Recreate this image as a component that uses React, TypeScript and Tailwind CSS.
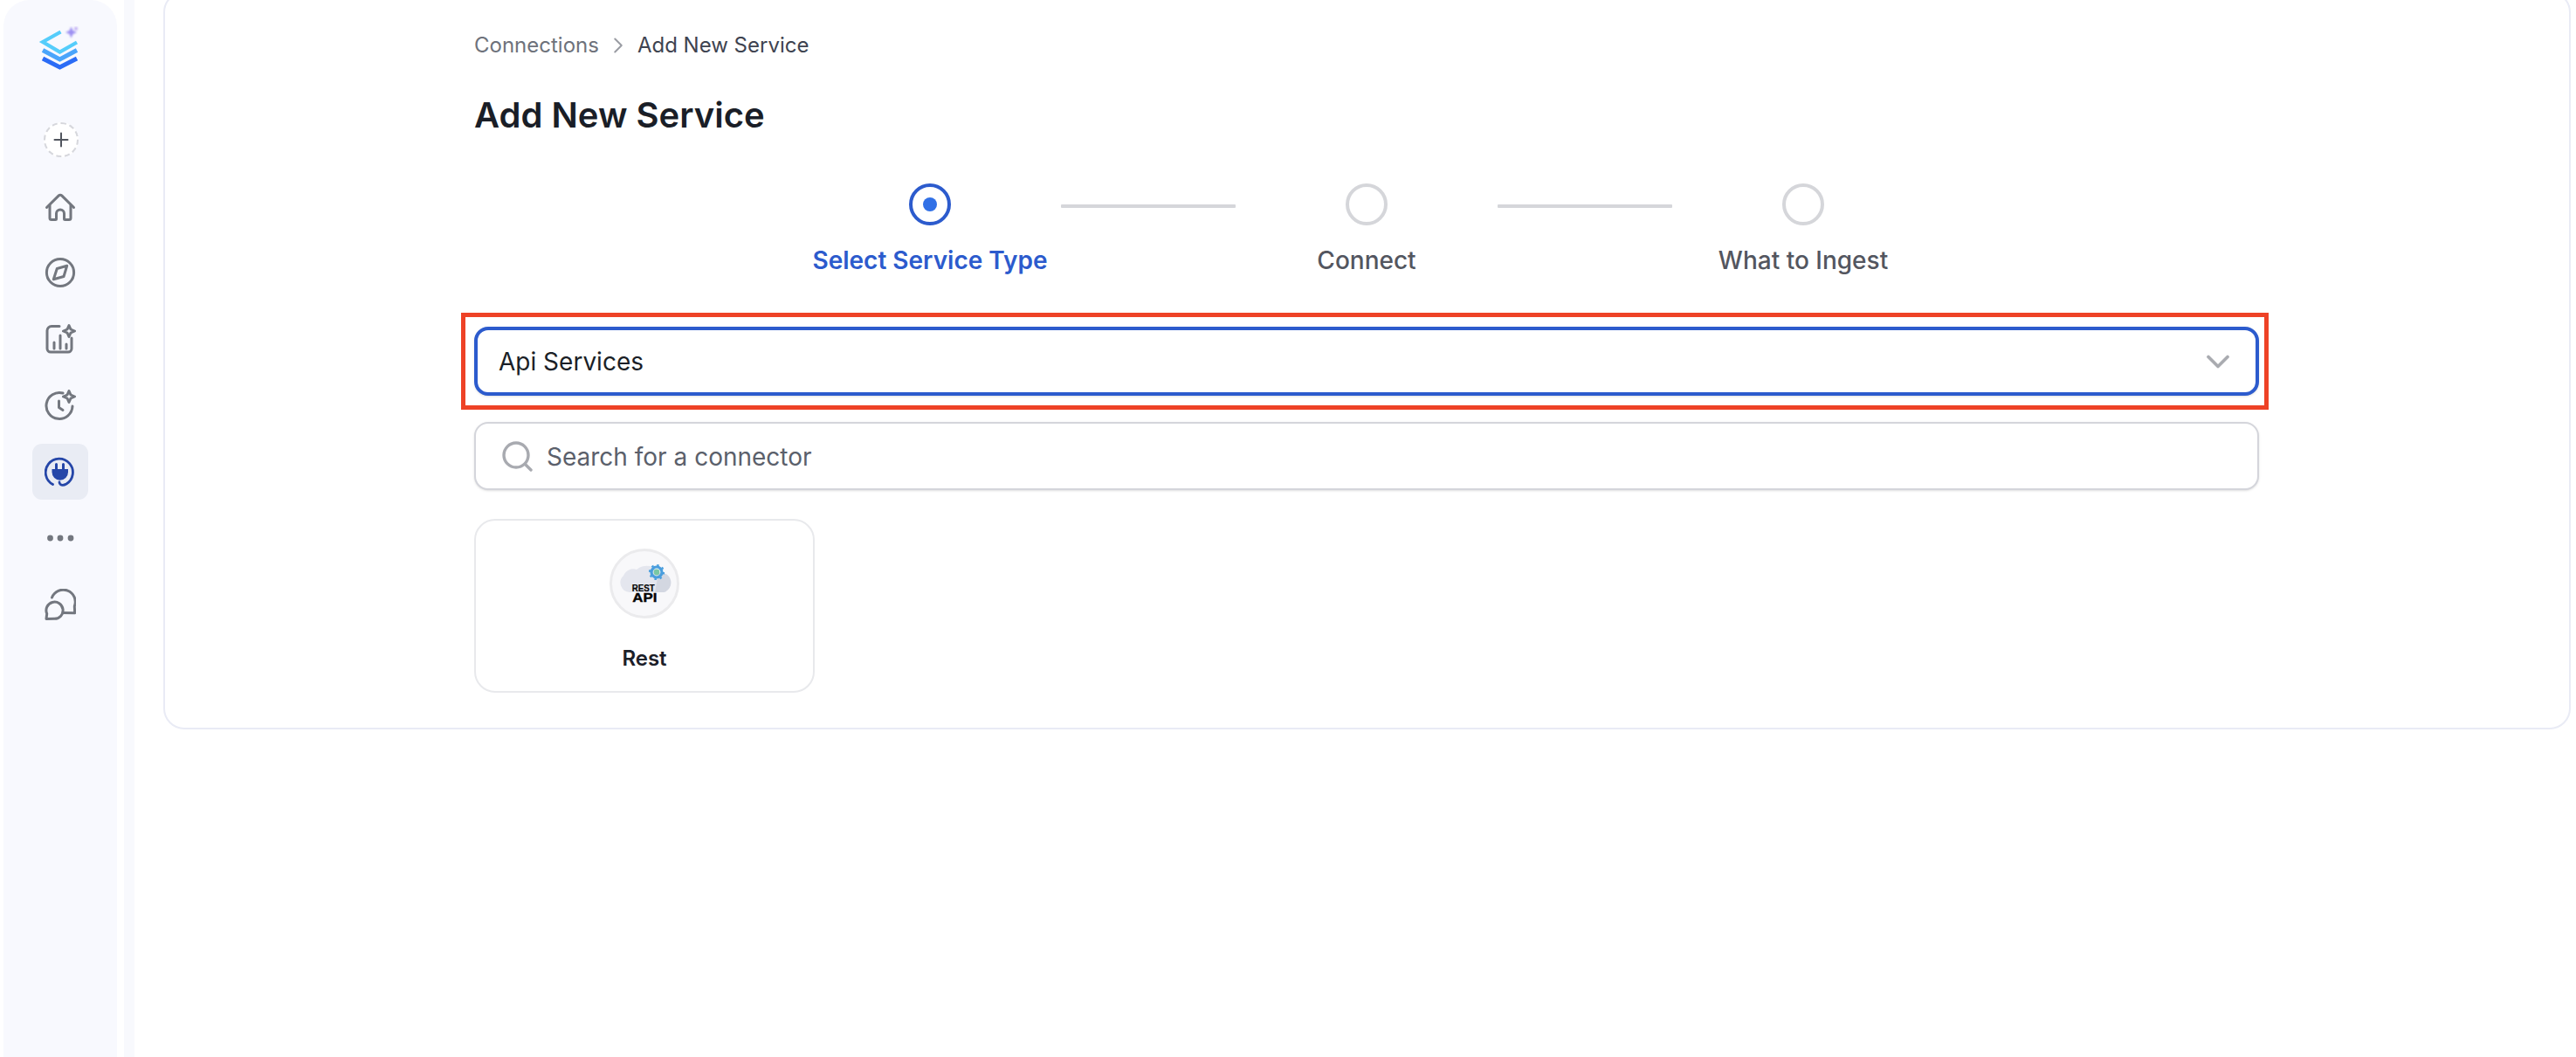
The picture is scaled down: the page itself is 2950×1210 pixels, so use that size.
import { ChevronDown, ChevronRight } from 'lucide-react';
import type { ReactNode } from 'react';

function Logo() {
    return (
        <svg width="50" height="52" viewBox="0 0 50 52" fill="none">
            <path d="M25.5 6.5 5 18 24.5 29.5 44 18.5" stroke="#55cdfb" strokeWidth="4.2" />
            <path d="M5 27.5 24.5 38 44 27.5" stroke="#4aa5fb" strokeWidth="5" />
            <path d="M5 37 24.5 47 44 37" stroke="#2b6cf6" strokeWidth="5" />
            <g className="blur-[0.8px]">
                <path d="M37.500 0.500 39.500 5 44 7 39.500 9 37.500 13.500 35.500 9 31 7 35.500 5Z" fill="#8474ef" opacity="0.8" />
                <circle cx="43" cy="2.800" r="2" fill="#a78bf0" opacity="0.7" />
            </g>
        </svg>
    );
}

function NavIcon({ children }: { children: ReactNode }) {
    return (
        <svg width="36" height="36" viewBox="0 0 36 36" fill="none" stroke="#73777f" strokeWidth="3" strokeLinecap="round" strokeLinejoin="round">
            {children}
        </svg>
    );
}

function NavItem({ active, children }: { active?: boolean; children: ReactNode }) {
    return (
        <div className={active ? 'flex h-[64px] w-[64px] items-center justify-center rounded-[11px] bg-[#e9ecf4]' : 'flex h-[64px] w-[64px] items-center justify-center'}>
            {children}
        </div>
    );
}

function Sidebar() {
    return (
        <aside className="flex w-[130px] shrink-0 flex-col items-center rounded-t-[30px] bg-[#f8f9fe] pt-[30px]">
            <Logo />
            <div className="mt-[58px] ml-[2px] flex h-[40px] w-[40px] items-center justify-center rounded-full border-2 border-dashed border-[#d6d7dc] bg-white">
                <svg width="18" height="18" viewBox="0 0 18 18" stroke="#51555e" strokeWidth="2" strokeLinecap="round">
                    <path d="M9 1.500v15M1.500 9h15" />
                </svg>
            </div>
            <div className="mt-[24px] flex flex-col items-center gap-[12px]">
                <NavItem>
                    <NavIcon>
                        <g transform="translate(0 1.500)">
                            <path d="M2.500 18 16.300 4.400a2.400 2.400 0 0 1 3.400 0L33.500 18" />
                            <path d="M6 15.500V30a2 2 0 0 0 2 2h4.500a1 1 0 0 0 1-1v-6a4.500 4.500 0 0 1 9 0v6a1 1 0 0 0 1 1H28a2 2 0 0 0 2-2V15.500" />
                        </g>
                    </NavIcon>
                </NavItem>
                <NavItem>
                    <NavIcon>
                        <circle cx="18" cy="18" r="15.600" />
                        <path d="M25.700 10.300 14.300 13.500 10.300 25.700 22 22.500Z" />
                    </NavIcon>
                </NavItem>
                <NavItem>
                    <NavIcon>
                        <path d="M17 3.500H8a5 5 0 0 0-5 5V29a4 4 0 0 0 4 4h20a4 4 0 0 0 4-4V17" />
                        <path d="M11 22v7M18 14v15M25 24v5" />
                        <path d="M28 2.500 30 7 34.500 9 30 11 28 15.500 26 11 21.500 9 26 7Z" />
                    </NavIcon>
                </NavItem>
                <NavItem>
                    <NavIcon>
                        <path d="M21 4a15 15 0 1 0 11 15" />
                        <path d="M16.500 13v7.500l4.500 3" />
                        <path d="M28 1.500 30 6 34.500 8 30 10 28 14.500 26 10 21.500 8 26 6Z" />
                    </NavIcon>
                </NavItem>
                <NavItem active>
                    <svg width="36" height="36" viewBox="0 0 36 36" fill="none">
                        <path d="M9.500 32.500A15.600 15.600 0 1 1 25 32c-2.500 1.400-5 1.600-6.500.8-.9-.5-1.500-1.400-1.500-2.800" stroke="#2546a8" strokeWidth="2.800" strokeLinecap="round" />
                        <path d="M13.500 9.500v6M21.500 9.500v6" stroke="#2546a8" strokeWidth="3" strokeLinecap="round" />
                        <path d="M8.500 15h18.500v3.500a9.200 9.200 0 0 1-18.500 0Z" fill="#2546a8" />
                    </svg>
                </NavItem>
                <NavItem>
                    <svg width="36" height="12" viewBox="0 0 36 12" fill="#73777f">
                        <circle cx="6.500" cy="6" r="3.400" />
                        <circle cx="18" cy="6" r="3.400" />
                        <circle cx="30" cy="6" r="3.400" />
                    </svg>
                </NavItem>
                <NavItem>
                    <NavIcon>
                        <path d="M8.500 10A13.700 13.700 0 0 1 34.300 20l.4 7.700-13.700-.2" />
                        <path d="M2 34.500l.7-6a9.600 9.600 0 1 1 8.600 5.800Z" />
                    </NavIcon>
                </NavItem>
            </div>
        </aside>
    );
}

function Step({ label, active }: { label: string; active?: boolean }) {
    return (
        <div className="flex w-[300px] flex-col items-center">
            {active ? (
                <div className="flex h-[48px] w-[48px] items-center justify-center rounded-full border-[4px] border-[#2c5bcd] bg-white">
                    <div className="h-[16px] w-[16px] rounded-full bg-[#3170e6]" />
                </div>
            ) : (
                <div className="h-[48px] w-[48px] rounded-full border-[4px] border-[#d5d6da] bg-white" />
            )}
            <span className={active ? 'mt-[22px] text-[28px] leading-[36px] font-semibold whitespace-nowrap text-[#2c5bcd]' : 'mt-[22px] text-[28px] leading-[36px] font-medium whitespace-nowrap text-[#53565f]'}>
                {label}
            </span>
        </div>
    );
}

function RestLogo() {
    return (
        <div className="flex h-[80px] w-[80px] items-center justify-center rounded-full border-[3px] border-[#ebebed] bg-[#f8f8fa]">
            <svg width="74" height="74" viewBox="0 0 74 74">
                <path d="M20 47a11 11 0 0 1-7-19 12 12 0 0 1 15-7 17 17 0 0 1 27 6 10.500 10.500 0 0 1 5 20Z" fill="#e4e6ee" />
                <path d="M53 25a10.500 10.500 0 0 1 6 22H49Z" fill="#d3d7e1" />
                <circle cx="51" cy="24" r="6" fill="none" stroke="#4a9edd" strokeWidth="3.200" />
                <circle cx="51" cy="24" r="8" fill="none" stroke="#4a9edd" strokeWidth="2.200" strokeDasharray="2.500 3.780" />
                <circle cx="51" cy="24" r="3.400" fill="#79c7a4" />
                <text x="22.700" y="45.700" textLength="26" lengthAdjust="spacingAndGlyphs" fontFamily="Liberation Sans, sans-serif" fontWeight="700" fontSize="10" fill="#050505" stroke="#050505" strokeWidth="0.200">REST</text>
                <text x="23.300" y="58.300" textLength="28" lengthAdjust="spacingAndGlyphs" fontFamily="Liberation Sans, sans-serif" fontWeight="700" fontSize="14.500" fill="#050505" stroke="#050505" strokeWidth="0.400">API</text>
            </svg>
        </div>
    );
}

export default function App() {
    return (
        <div className="flex h-[1210px] w-[2950px] overflow-hidden bg-white pl-[4px] [font-family:Inter,sans-serif]">
            <Sidebar />
            <div className="ml-[8px] w-[12px] shrink-0 bg-[#f8f9fd]" />
            <main className="flex-1 pl-[33px]">
                <section className="-mt-[10px] h-[845px] w-[2757px] rounded-[24px] border-2 border-[#e9ebf5] bg-white pt-[43px] pl-[354px]">
                    <div className="w-[2044px]">
                        <nav className="flex h-[34px] items-center text-[24px]">
                            <span className="text-[#6e727b]">Connections</span>
                            <ChevronRight className="mx-[7px] size-[30px] text-[#9a9ca3]" strokeWidth={1.600} />
                            <span className="text-[#3e4350]">Add New Service</span>
                        </nav>
                        <h1 className="mt-[39px] text-[40px] leading-[48px] font-semibold text-[#1a1e27]">Add New Service</h1>
                        <div className="mt-[54px] flex justify-center">
                            <Step label="Select Service Type" active />
                            <div className="mt-[24px] h-[4px] w-[200px] rounded-[1px] bg-[#d5d6da]" />
                            <Step label="Connect" />
                            <div className="mt-[24px] h-[4px] w-[200px] rounded-[1px] bg-[#d5d6da]" />
                            <Step label="What to Ingest" />
                        </div>
                        <div className="relative mt-[58px] flex h-[79px] items-center justify-between rounded-[16px] border-[4px] border-[#2c5bcd] bg-white pr-[21px] pl-[24px] shadow-sm">
                            <span className="text-[28px] text-[#1b1f27]">Api Services</span>
                            <ChevronDown className="size-[44px] text-[#a9abb0]" strokeWidth={2} />
                            <div className="absolute -top-[20px] -right-[15px] -bottom-[20px] -left-[19px] border-[5px] border-[#ee4226]" />
                        </div>
                        <div className="mt-[30px] flex h-[78px] items-center rounded-[16px] border-2 border-[#d4d5db] bg-white pl-[29px] shadow-sm">
                            <svg width="36" height="36" viewBox="0 0 36 36" fill="none" stroke="#a8aab0" strokeWidth="3.400" strokeLinecap="round">
                                <circle cx="17" cy="17" r="14" />
                                <path d="M28 28 34 34" />
                            </svg>
                            <span className="ml-[16px] pt-[2px] text-[28px] text-[#5b606b]">Search for a connector</span>
                        </div>
                        <div className="mt-[33px] flex h-[199px] w-[390px] flex-col items-center rounded-[24px] border-2 border-[#e8e9ec] bg-white pt-[32px]">
                            <RestLogo />
                            <span className="mt-[30px] text-[24px] leading-[32px] font-semibold text-[#1c2029]">Rest</span>
                        </div>
                    </div>
                </section>
            </main>
        </div>
    );
}
